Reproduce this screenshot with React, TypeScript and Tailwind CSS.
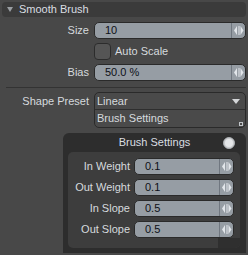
import React from "react";

const Spin = () => (
  <div className="w-[14px] shrink-0 border-l border-[#707780] flex items-center justify-center">
    <svg width="10" height="9" viewBox="0 0 10 9">
      <polygon points="3,0 0,4.5 3,9" fill="#e2e6ea" />
      <rect x="4.5" y="0" width="1" height="9" fill="#e2e6ea" />
      <polygon points="6.5,0 9.5,4.5 6.5,9" fill="#e2e6ea" />
    </svg>
  </div>
);

const Field = ({ value }: { value: string }) => (
  <div className="flex-1 h-[17px] flex rounded-[5px] border border-[#2a2a2a] bg-[#969da4] overflow-hidden">
    <div className="flex-1 pl-[10px] flex items-center text-[#0e1018] leading-none">{value}</div>
    <Spin />
  </div>
);

const Row = ({ label, value, cls }: { label: string; value: string; cls: string }) => (
  <div className={`flex items-center h-[17px] mr-[2px] ${cls}`}>
    <div className="w-[89px] text-right text-[#d6dade] leading-none">{label}</div>
    <div className="ml-[5px] flex-1 flex">
      <Field value={value} />
    </div>
  </div>
);

const InnerRow = ({ label, value, cls }: { label: string; value: string; cls: string }) => (
  <div className={`flex items-center h-[17px] mr-[6px] ${cls}`}>
    <div className="w-[62px] text-right text-[#d6dade] leading-none">{label}</div>
    <div className="ml-[4px] flex-1 flex">
      <Field value={value} />
    </div>
  </div>
);

export default function App() {
  return (
    <div
      className="w-[248px] h-[255px] bg-[#484848] overflow-hidden text-[11px] flex flex-col"
      style={{ fontFamily: '"Liberation Sans", Arial, sans-serif' }}
    >
      <div className="mx-[2px] mt-[2px] h-[15px] rounded-[4px] bg-[#3b3b3b] flex items-center">
        <svg width="6" height="5" viewBox="0 0 6 5" className="ml-[5px]">
          <polygon points="0,0 6,0 3,5" fill="#9a9ea2" />
        </svg>
        <span className="ml-[6px] text-[#dadee2] text-[11px] leading-none">Smooth Brush</span>
      </div>

      <Row label="Size" value="10" cls="mt-[5px]" />

      <div className="flex items-center h-[17px] mt-[4px]">
        <div className="ml-[94px] w-[17px] h-[17px] rounded-[4px] border border-[#2c2c2c] bg-[#555555]" />
        <span className="ml-[4px] text-[#d6dade] leading-none">Auto Scale</span>
      </div>

      <Row label="Bias" value="50.0 %" cls="mt-[4px]" />

      <div className="mt-[6px] ml-[6px] mr-[2px] h-[1px] bg-[#333333]" />

      <div className="flex mt-[4px] mr-[2px]">
        <div className="w-[89px] h-[18px] flex items-center justify-end text-[#d6dade] leading-none">
          Shape Preset
        </div>
        <div className="ml-[5px] flex-1 rounded-[5px] border border-[#2a2a2a] bg-[#4a4a4a] flex flex-col">
          <div className="h-[17px] flex items-center pl-[2px] pr-[5px] border-b border-[#2e2e2e]">
            <span className="flex-1 text-[#d6dade] leading-none">Linear</span>
            <svg width="8" height="5" viewBox="0 0 8 5">
              <polygon points="0,0 8,0 4,5" fill="#d4d6d8" />
            </svg>
          </div>
          <div className="h-[17px] flex items-center pl-[2px] pr-[2px]">
            <span className="flex-1 text-[#d6dade] leading-none">Brush Settings</span>
            <div className="self-end mb-[1px] w-[4px] h-[4px] border border-[#bfc3c7]" />
          </div>
        </div>
      </div>

      <div className="mt-[5px] ml-[63px] mr-[2px] h-[120px] rounded-tl-[6px] rounded-tr-[6px] bg-[#2d2d2d] flex flex-col">
        <div className="h-[19px] flex items-center relative">
          <span className="flex-1 text-center text-[#dadee2] leading-none">Brush Settings</span>
          <div className="absolute right-[11px] top-[4px] w-[12px] h-[12px] rounded-full border-[1.5px] border-[#a9adb1] bg-[#e4e6e8] shadow-[inset_0_0_0_1px_#c8cacc]" />
        </div>
        <div className="ml-[5px] mr-[6px] h-[96px] rounded-[5px] bg-[#3d3d3d] flex flex-col overflow-hidden">
          <InnerRow label="In Weight" value="0.1" cls="mt-[6px]" />
          <InnerRow label="Out Weight" value="0.1" cls="mt-[4px]" />
          <InnerRow label="In Slope" value="0.5" cls="mt-[4px]" />
          <InnerRow label="Out Slope" value="0.5" cls="mt-[4px]" />
          <div className="flex-1 flex">
            <div className="flex-1" />
            <div className="w-[22px] bg-[#2f2f2f]" />
          </div>
        </div>
      </div>
    </div>
  );
}
